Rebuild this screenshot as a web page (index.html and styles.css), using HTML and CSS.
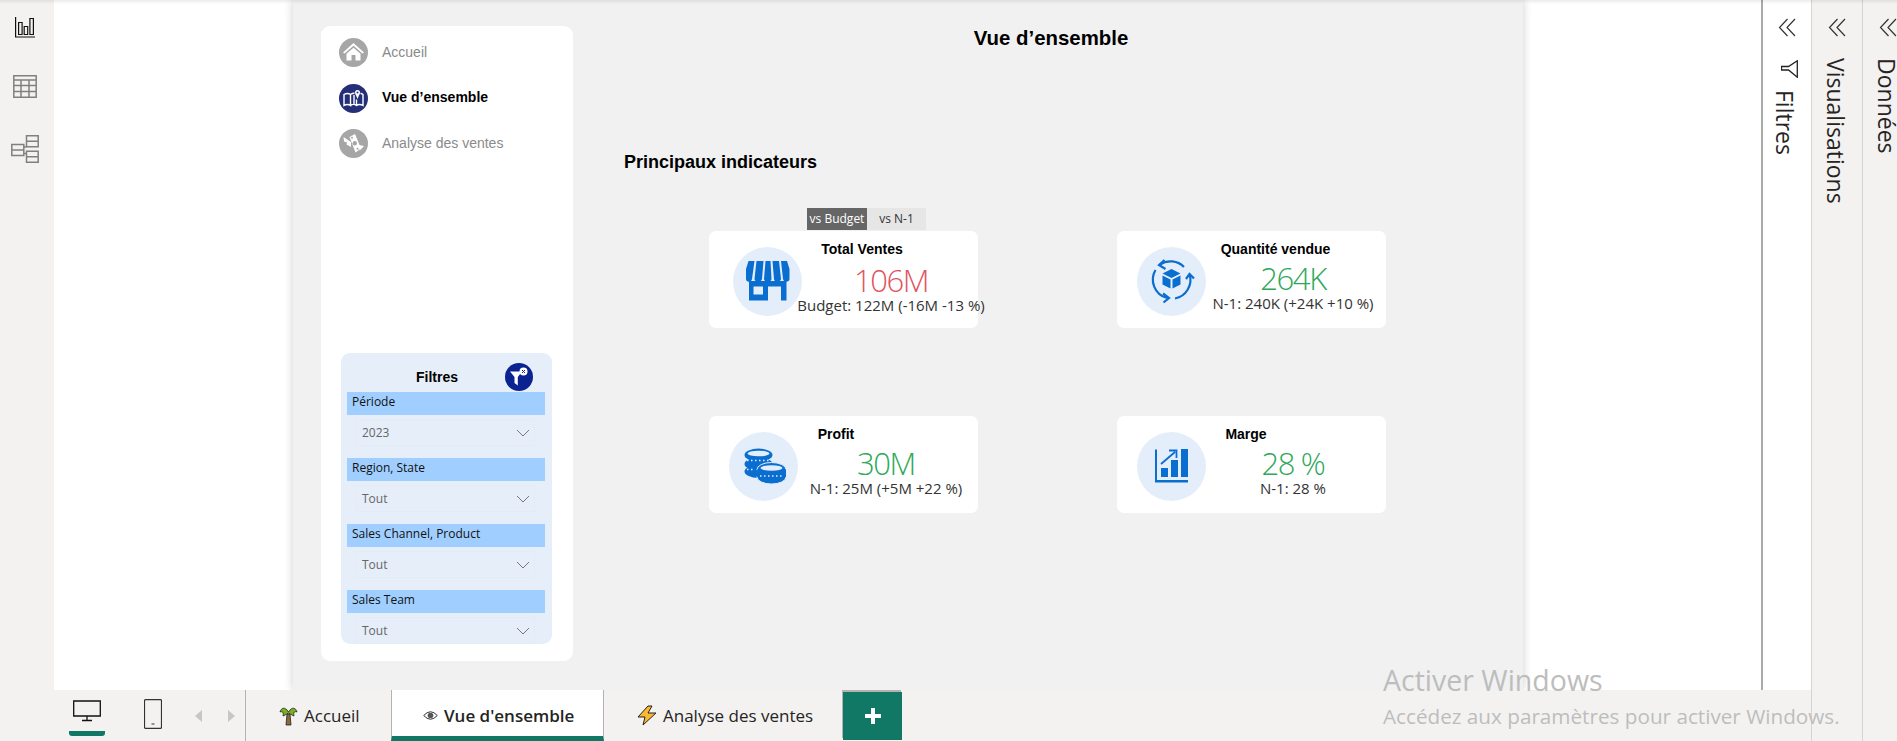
FILE: index.html
```html
<!DOCTYPE html>
<html lang="fr">
<head>
<meta charset="utf-8">
<title>Vue d'ensemble</title>
<link rel="stylesheet" href="styles.css">
</head>
<body>
<div class="app">
  <div class="workspace">
    <div class="upper">
      <div class="rail">
        <svg class="rail-icon" width="20" height="21" viewBox="0 0 20 21" fill="none" stroke="#111" stroke-width="1.200">
          <path d="M.6 0V20H20"/>
          <path d="M3.600 5.500h3.500V17.500H3.600zM9.200 9.500h3.500v8H9.200zM14.900 1.500h3.500v16h-3.500z"/>
        </svg>
        <svg class="rail-icon" width="24" height="23" viewBox="0 0 24 23" fill="none" stroke="#808080" stroke-width="1.500">
          <path d="M.8 .8h22.400v21.400H.8zM.8 5h22.400M.8 10.500h22.400M.8 16.500h22.400M8 5v17.200M16 5v17.200"/>
        </svg>
        <svg class="rail-icon" width="28" height="28" viewBox="0 0 28 28" fill="none" stroke="#808080" stroke-width="1.500">
          <path d="M.8 9.500h12v11H.8zM.8 15h12M15.500 .8h11.700v11H15.500zM15.500 6.300h11.700M15.500 16.200h11.700v11H15.500zM15.500 21.700h11.700M12.800 12H15.500M12.800 18.500H15.500"/>
        </svg>
      </div>
      <div class="canvas">
        <div class="report">
          <nav class="nav-card">
            <a class="nav-item">
              <svg class="nav-dot" viewBox="0 0 29 29">
                <circle cx="14.500" cy="14.500" r="14.500" fill="#a6a6a6"/>
                <path d="M4 14.500 14.500 5 25 14.500 23.500 15.500 14.500 7.800 5.500 15.500Z M7.500 15.800 14.500 9.800 21.500 15.800V22.500H16.500V17H12.500V22.500H7.500Z" fill="#fff"/>
              </svg>
              <span>Accueil</span>
            </a>
            <a class="nav-item nav-item-on">
              <svg class="nav-dot" viewBox="0 0 29 29">
                <circle cx="14.500" cy="14.500" r="14.500" fill="#252f78"/>
                <path d="M5 10.500C7.500 9 9.500 9 11.500 10.500V21.500C9.500 20 7.500 20 5 21.500ZM11.500 10.500C13 9.500 14 9.200 15.500 9.300M11.500 21.500C13.500 20 15.500 20 17.500 21.500 19.500 20 21.500 20 24 21.500V10.500C23 9.800 22.300 9.500 21.500 9.300M17.500 15.500V21.500M15 11V20" fill="none" stroke="#fff" stroke-width="1.400"/>
                <circle cx="18.500" cy="8.500" r="2.500" fill="#fff"/>
                <path d="M16.500 10 18.500 15 20.500 10Z" fill="#fff"/>
                <circle cx="18.500" cy="8.500" r="1" fill="#252f78"/>
              </svg>
              <span>Vue d’ensemble</span>
            </a>
            <a class="nav-item">
              <svg class="nav-dot" viewBox="0 0 29 29">
                <circle cx="14.500" cy="14.500" r="14.500" fill="#a6a6a6"/>
                <path d="M4.500 8 12 13 12 18 7.500 15.500 8 13.500 5 12.500Z" fill="#fff"/>
                <path d="M25 17 17.500 15.500 17.500 20.500 21.500 20 20.500 22Z" fill="#fff"/>
                <path d="M10.500 8 16 5 22 19.500 16.500 23.500Z" fill="#fff"/>
                <circle cx="15.800" cy="14.200" r="2.200" fill="#a6a6a6"/>
                <circle cx="13" cy="8.800" r="1" fill="#a6a6a6"/>
                <circle cx="18.500" cy="19.800" r="1" fill="#a6a6a6"/>
              </svg>
              <span>Analyse des ventes</span>
            </a>
            <div class="filters">
              <div class="filters-head">
                <span class="filters-title">Filtres</span>
                <svg class="filters-btn" viewBox="0 0 28 28">
                  <circle cx="14" cy="14" r="14" fill="#0a2391"/>
                  <path d="M5 8.500H17L12.800 14V22.500L9.500 20V14Z" fill="#fff"/>
                  <circle cx="18.500" cy="8.500" r="4" fill="#fff"/>
                  <path d="M17 7 20 10M20 7 17 10" stroke="#0a2391" stroke-width="1"/>
                </svg>
              </div>
              <div class="slicer">
                <div class="slicer-label">Période</div>
                <div class="slicer-box"><span>2023</span><svg class="chev" viewBox="0 0 14 8"><path d="M1 1 7 7 13 1"/></svg></div>
              </div>
              <div class="slicer">
                <div class="slicer-label">Region, State</div>
                <div class="slicer-box"><span>Tout</span><svg class="chev" viewBox="0 0 14 8"><path d="M1 1 7 7 13 1"/></svg></div>
              </div>
              <div class="slicer">
                <div class="slicer-label">Sales Channel, Product</div>
                <div class="slicer-box"><span>Tout</span><svg class="chev" viewBox="0 0 14 8"><path d="M1 1 7 7 13 1"/></svg></div>
              </div>
              <div class="slicer">
                <div class="slicer-label">Sales Team</div>
                <div class="slicer-box"><span>Tout</span><svg class="chev" viewBox="0 0 14 8"><path d="M1 1 7 7 13 1"/></svg></div>
              </div>
            </div>
          </nav>
          <main class="main">
            <h1 class="page-title">Vue d’ensemble</h1>
            <h2 class="section-title">Principaux indicateurs</h2>
            <div class="toggle">
              <span class="toggle-on">vs Budget</span>
              <span class="toggle-off">vs N-1</span>
            </div>
            <div class="kpis">
              <div class="kpi kpi-sales">
                <svg class="kpi-icon" viewBox="0 0 69 69">
                  <circle cx="34.500" cy="34.500" r="34.500" fill="#e4eefa"/>
                  <path d="M16 34H53.500V53.500H48V39.500H35V53.500H16ZM20.500 39.500V47.500H30V39.500Z" fill="#0a6ed1"/>
                  <path d="M15.500 14H21.500L19 32C18.500 35.500 13 35.500 13 32V22ZM23.500 14H30.500L29 32C28.500 35.500 21.500 35.500 21.500 32ZM32.500 14H37.500L38.500 32C38.500 35.500 31 35.500 31 32ZM39.500 14H46L48 32C47.500 35.500 41 35.500 41 32ZM48 14H54L56.500 22V32C56.500 35.500 50.500 35.500 50 32Z" fill="#0a6ed1"/>
                </svg>
                <div class="kpi-body">
                  <div class="kpi-name">Total Ventes</div>
                  <div class="kpi-value kpi-bad">106M</div>
                  <div class="kpi-sub">Budget: 122M (-16M -13 %)</div>
                </div>
              </div>
              <div class="kpi kpi-qty">
                <svg class="kpi-icon" viewBox="0 0 69 69">
                  <circle cx="34.500" cy="34.500" r="34.500" fill="#e4eefa"/>
                  <g fill="none" stroke="#0a6ed1" stroke-width="2.200">
                    <path d="M23 17.500A19 19 0 0 1 47 20"/>
                    <path d="M27.500 13 22 18 28.500 22"/>
                    <path d="M52.500 27A19 19 0 0 1 38 51.500"/>
                    <path d="M49 32 52.500 27 57 31.500"/>
                    <path d="M18.500 23A19 19 0 0 0 30 51"/>
                    <path d="M26 46.500 32 51 26.500 55.500"/>
                  </g>
                  <path d="M34.500 22 43.500 26.500 34.500 31 25.500 26.500ZM25.500 28.500 33.500 32.500V41.500L25.500 37.500ZM43.500 28.500 35.500 32.500V41.500L43.500 37.500Z" fill="#0a6ed1"/>
                </svg>
                <div class="kpi-body">
                  <div class="kpi-name">Quantité vendue</div>
                  <div class="kpi-value kpi-good">264K</div>
                  <div class="kpi-sub">N-1: 240K (+24K +10 %)</div>
                </div>
              </div>
              <div class="kpi kpi-profit">
                <svg class="kpi-icon" viewBox="0 0 69 69">
                  <circle cx="34.500" cy="34.500" r="34.500" fill="#e4eefa"/>
                  <g fill="#0a6ed1">
                    <ellipse cx="29.500" cy="23" rx="14" ry="6.500"/>
                    <ellipse cx="29.500" cy="32" rx="14" ry="6.500"/>
                    <ellipse cx="29.500" cy="39.500" rx="14" ry="6.500"/>
                    <ellipse cx="42.500" cy="37.500" rx="14.500" ry="7" stroke="#e4eefa" stroke-width="1"/>
                    <ellipse cx="42.500" cy="45" rx="14.500" ry="7" stroke="#e4eefa" stroke-width="1"/>
                    <path d="M28 37.500H57V45H28Z"/>
                  </g>
                  <ellipse cx="29.500" cy="21.500" rx="11" ry="2.800" fill="#e4eefa"/>
                  <ellipse cx="42.500" cy="36" rx="11" ry="2.800" fill="#e4eefa"/>
                  <path d="M18 28.500H41M18 37.500H26M31 44H54" stroke="#e4eefa" stroke-width="1.300" stroke-dasharray="1.500 2.500"/>
                </svg>
                <div class="kpi-body">
                  <div class="kpi-name">Profit</div>
                  <div class="kpi-value kpi-good">30M</div>
                  <div class="kpi-sub">N-1: 25M (+5M +22 %)</div>
                </div>
              </div>
              <div class="kpi kpi-margin">
                <svg class="kpi-icon" viewBox="0 0 69 69">
                  <circle cx="34.500" cy="34.500" r="34.500" fill="#e4eefa"/>
                  <g fill="#0a6ed1">
                    <path d="M18 17.500H20V48H51V50.500H18Z"/>
                    <path d="M24 36H31V45H24ZM34 28H41V45H34ZM44 17H51V45H44Z"/>
                  </g>
                  <path d="M24 32 38 20M32 18.500H39.500V26" fill="none" stroke="#0a6ed1" stroke-width="1.800"/>
                </svg>
                <div class="kpi-body">
                  <div class="kpi-name">Marge</div>
                  <div class="kpi-value kpi-good">28 %</div>
                  <div class="kpi-sub">N-1: 28 %</div>
                </div>
              </div>
            </div>
          </main>
        </div>
      </div>
      <aside class="pane pane-filters">
        <svg class="collapse" viewBox="0 0 18 19"><path d="M9.500 1 1.500 9.500 9.500 18M17 1 9 9.500 17 18"/></svg>
        <svg class="funnel" viewBox="0 0 17 18" fill="none" stroke="#222" stroke-width="1.300"><path d="M.5 6.500H7.500L16.300 .8V17.200L7.500 10H.5Z"/></svg>
        <span class="pane-label pane-label-filters">Filtres</span>
      </aside>
    </div>
    <footer class="tabbar">
      <div class="views">
        <div class="view view-on">
          <svg width="28" height="22" viewBox="0 0 28 22" fill="none" stroke="#111" stroke-width="1.300"><path d="M.7 1h26.600v15H.7zM14 16v4M9 20.500h10"/></svg>
        </div>
        <div class="view">
          <svg width="18" height="30" viewBox="0 0 18 30" fill="none" stroke="#333" stroke-width="1.200"><path d="M1.500.700h15q1 0 1 1v26.600q0 1-1 1h-15q-1 0-1-1V1.700q0-1 1-1zM7.500 25h3"/></svg>
        </div>
        <div class="arrows">
          <span class="arrow arrow-left"></span>
          <span class="arrow arrow-right"></span>
        </div>
      </div>
      <div class="tab tab-home">
        <svg width="19" height="21" viewBox="0 0 19 21">
          <path d="M8 9H11L12 20H7Z" fill="#8a6a3c" stroke="#222" stroke-width=".8"/>
          <path d="M9.500 7C6 1 2 3 1 7 3 6 5 7 4 11 6 10 8 9 9.500 8 11 9 13 10 15 11 14 7 16 6 18 7 17 3 13 1 9.500 7Z" fill="#79b01f" stroke="#222" stroke-width=".8"/>
        </svg>
        <span>Accueil</span>
      </div>
      <div class="tab tab-on">
        <svg width="15" height="11" viewBox="0 0 15 11">
          <path d="M.7 5.500Q7.500-2 14.300 5.500 7.500 13 .7 5.500Z" fill="#fff" stroke="#333"/>
          <circle cx="7.500" cy="5.500" r="2.800" fill="#555"/>
        </svg>
        <span>Vue d'ensemble</span>
      </div>
      <div class="tab tab-sales">
        <svg width="20" height="21" viewBox="0 0 20 21">
          <path d="M11 1 1 12H8L6 20 19 8H11L15 1Z" fill="#fbb92f" stroke="#222" stroke-width="1"/>
        </svg>
        <span>Analyse des ventes</span>
      </div>
      <div class="tab-add">
        <svg width="18" height="18" viewBox="0 0 18 18"><path d="M7 1h4v6h6v4h-6v6H7v-6H1V7h6z" fill="#fff"/></svg>
      </div>
    </footer>
  </div>
  <aside class="pane pane-vis">
    <svg class="collapse" viewBox="0 0 18 19"><path d="M9.500 1 1.500 9.500 9.500 18M17 1 9 9.500 17 18"/></svg>
    <span class="pane-label">Visualisations</span>
  </aside>
  <aside class="pane pane-data">
    <svg class="collapse" viewBox="0 0 18 19"><path d="M9.500 1 1.500 9.500 9.500 18M17 1 9 9.500 17 18"/></svg>
    <span class="pane-label">Données</span>
  </aside>
</div>
<div class="top-shade"></div>
<div class="watermark">
  <div class="watermark-big">Activer Windows</div>
  <div class="watermark-small">Accédez aux paramètres pour activer Windows.</div>
</div>
</body>
</html>
```
FILE: styles.css
```css
html, body {
  margin: 0;
  height: 741px;
  overflow: hidden;
  background: #f3f2f1;
  font-family: "Open Sans", sans-serif;
  color: #252423;
}
.app {
  display: flex;
  height: 741px;
}
.workspace {
  width: 1811px;
  flex: none;
  display: flex;
  flex-direction: column;
}
.upper {
  height: 690px;
  flex: none;
  display: flex;
}
.top-shade {
  position: absolute;
  left: 0;
  top: 0;
  width: 100%;
  height: 4px;
  background: linear-gradient(rgba(0, 0, 0, .08), rgba(0, 0, 0, 0));
}

/* left rail */
.rail {
  width: 54px;
  flex: none;
  display: flex;
  flex-direction: column;
  align-items: center;
  padding: 17px 5px 0 0;
  box-sizing: border-box;
  gap: 37px;
}
.rail-icon {
  display: block;
}

/* canvas */
.canvas {
  flex: 1;
  background: #fff;
  padding-left: 239px;
  overflow: hidden;
}
.report {
  width: 1230px;
  height: 690px;
  background: #f1f1f1;
  box-shadow: 0 0 9px rgba(0, 0, 0, .2);
  display: flex;
  padding: 26px 0 29px 28px;
  box-sizing: border-box;
  font-family: "Liberation Sans", Arial, sans-serif;
}
.nav-card {
  width: 252px;
  flex: none;
  background: #fff;
  border-radius: 9px;
  padding: 12px 0 17px 18px;
  box-sizing: border-box;
  display: flex;
  flex-direction: column;
  gap: 16.5px;
}
.nav-item {
  display: flex;
  align-items: center;
  gap: 14px;
  height: 29px;
  font-size: 14px;
  color: #8a8a8a;
}
.nav-item span {
  margin-top: -2px;
}
.nav-item-on {
  font-weight: bold;
  color: #000;
}
.nav-dot {
  width: 29px;
  height: 29px;
  flex: none;
}

/* filters */
.filters {
  margin-top: auto;
  margin-left: 2px;
  width: 211px;
  height: 291px;
  flex: none;
  background: #e6eff9;
  border-radius: 9px;
  overflow: hidden;
  font-family: "Open Sans", sans-serif;
}
.filters-head {
  height: 39px;
  display: flex;
  align-items: center;
}
.filters-title {
  width: 136px;
  padding-left: 28px;
  text-align: center;
  font: bold 14px "Liberation Sans", Arial, sans-serif;
  color: #000;
  margin-top: 8px;
  line-height: 30px;
}
.filters-btn {
  width: 28px;
  height: 28px;
  margin-top: 9px;
}
.slicer {
  margin: 0 6px 12px;
  width: 198px;
}
.slicer-label {
  height: 23px;
  line-height: 20px;
  background: #a0cfff;
  font-size: 12px;
  color: #111;
  padding-left: 5px;
}
.slicer-box {
  margin: 4px 10px 0 9px;
  height: 27px;
  box-sizing: border-box;
  border: 1px solid #e3ebf4;
  display: flex;
  align-items: center;
  justify-content: space-between;
  padding: 0 4px 0 5px;
  font-size: 12px;
  color: #666;
}
.chev {
  width: 14px;
  height: 8px;
  fill: none;
  stroke: #777;
  stroke-width: 1;
}

/* main area */
.main {
  flex: 1;
  padding-left: 51px;
}
.page-title {
  width: 854px;
  margin: 0;
  text-align: center;
  font-size: 20.400px;
  line-height: 24px;
  color: #000;
}
.section-title {
  margin: 100px 0 0;
  font-size: 18px;
  line-height: 24px;
  color: #000;
}
.toggle {
  margin: 34px 0 0 183px;
  display: flex;
  height: 22px;
  width: 119px;
  font: 12px/22px "Open Sans", sans-serif;
  text-align: center;
}
.toggle-on {
  width: 60px;
  background: #666;
  color: #fff;
}
.toggle-off {
  width: 59px;
  background: #e6e6e6;
  color: #333;
}
.kpis {
  margin: 1px 0 0 85px;
  display: grid;
  grid-template-columns: 269px 269px;
  column-gap: 139px;
  row-gap: 88px;
}
.kpi {
  height: 97px;
  background: #fff;
  border-radius: 7px;
  display: flex;
  align-items: center;
}
.kpi-icon {
  width: 69px;
  height: 69px;
  flex: none;
  margin: 4px 0 0 24px;
}
.kpi-body {
  width: 200px;
  flex: none;
  margin-left: -11px;
  align-self: flex-start;
  text-align: center;
  padding-top: 11px;
}
.kpi-name {
  font-weight: bold;
  font-size: 14px;
  line-height: 14px;
  color: #000;
  margin-bottom: 5px;
}
.kpi-value {
  font: 300 31px/34px "Open Sans", sans-serif;
  letter-spacing: -1.400px;
}
.kpi-bad {
  color: #e2525c;
}
.kpi-good {
  color: #2fa85a;
}
.kpi-sub {
  font: 15px/16px "Open Sans", sans-serif;
  color: #333;
}
.kpi-sales .kpi-name {
  margin-right: 58px;
  margin-bottom: 7px;
}
.kpi-qty .kpi-icon,
.kpi-margin .kpi-icon {
  margin-left: 20px;
}
.kpi-qty .kpi-body,
.kpi-margin .kpi-body {
  margin-left: -13px;
}
.kpi-qty .kpi-name {
  margin-right: 35px;
}
.kpi-profit .kpi-icon {
  margin-left: 20px;
}
.kpi-profit .kpi-body {
  margin-left: -12px;
}
.kpi-profit .kpi-name {
  margin-right: 100px;
}
.kpi-margin .kpi-name {
  margin-right: 94px;
}

/* right panes */
.pane {
  flex: none;
  display: flex;
  flex-direction: column;
  align-items: center;
  box-sizing: border-box;
  padding-top: 18px;
  overflow: hidden;
}
.pane-filters {
  width: 50px;
  background: #fff;
  border-left: 2px solid #aaa;
  margin-left: auto;
}
.pane-vis {
  width: 51px;
  border-left: 1px solid #d6d4d2;
  background: #f3f2f1;
}
.pane-data {
  width: 35px;
  border-left: 1px solid #d6d4d2;
  padding-left: 16px;
}
.collapse {
  width: 18px;
  height: 19px;
  flex: none;
  fill: none;
  stroke: #333;
  stroke-width: 1.200;
}
.funnel {
  width: 17px;
  height: 18px;
  margin: 23px 0 0 4px;
  flex: none;
}
.pane-label {
  writing-mode: vertical-rl;
  font-size: 23px;
  line-height: 24px;
  margin: 21px 2px 0 0;
  color: #252423;
}
.pane-label-filters {
  margin: 12px 4px 0 0;
}

/* bottom tabs */
.tabbar {
  height: 51px;
  flex: none;
  display: flex;
  font-size: 17px;
  color: #252423;
}
.views {
  width: 245px;
  flex: none;
  display: flex;
  padding-left: 69px;
  box-sizing: border-box;
}
.view {
  width: 36px;
  height: 46px;
  display: flex;
  align-items: center;
  justify-content: center;
  margin-right: 30px;
  padding-top: 2px;
  box-sizing: border-box;
}
.view-on {
  border-bottom: 5px solid #117865;
  border-radius: 0 0 3px 3px;
  padding-top: 0;
}
.arrows {
  display: flex;
  align-items: center;
  gap: 26px;
  height: 51px;
  margin-left: -6px;
}
.arrow {
  width: 0;
  height: 0;
  border-top: 6px solid transparent;
  border-bottom: 6px solid transparent;
}
.arrow-left {
  border-right: 7px solid #c8c6c4;
}
.arrow-right {
  border-left: 7px solid #c8c6c4;
}
.tab {
  display: flex;
  align-items: center;
  box-sizing: border-box;
  border-left: 1px solid #b5b3b1;
  gap: 6px;
}
.tab-home {
  width: 146px;
  padding-left: 33px;
}
.tab-on {
  width: 213px;
  background: #fff;
  border-bottom: 5px solid #117865;
  border-right: 1px solid #b5b3b1;
  padding: 5px 0 0 31px;
  font-weight: 600;
}
.tab-sales {
  width: 239px;
  border-left: none;
  padding-left: 33px;
}
.tab-add {
  width: 59px;
  height: 48px;
  margin-top: 2px;
  background: #117865;
  display: flex;
  align-items: center;
  justify-content: center;
  box-shadow: -1px -2px 0 #b5b3b1;
}

/* windows watermark */
.watermark {
  position: absolute;
  left: 1383px;
  top: 662px;
  color: #bdbdbd;
}
.watermark-big {
  font-size: 28.500px;
  line-height: 36px;
}
.watermark-small {
  font-size: 20.700px;
  line-height: 24px;
  margin-top: 6px;
}
```
